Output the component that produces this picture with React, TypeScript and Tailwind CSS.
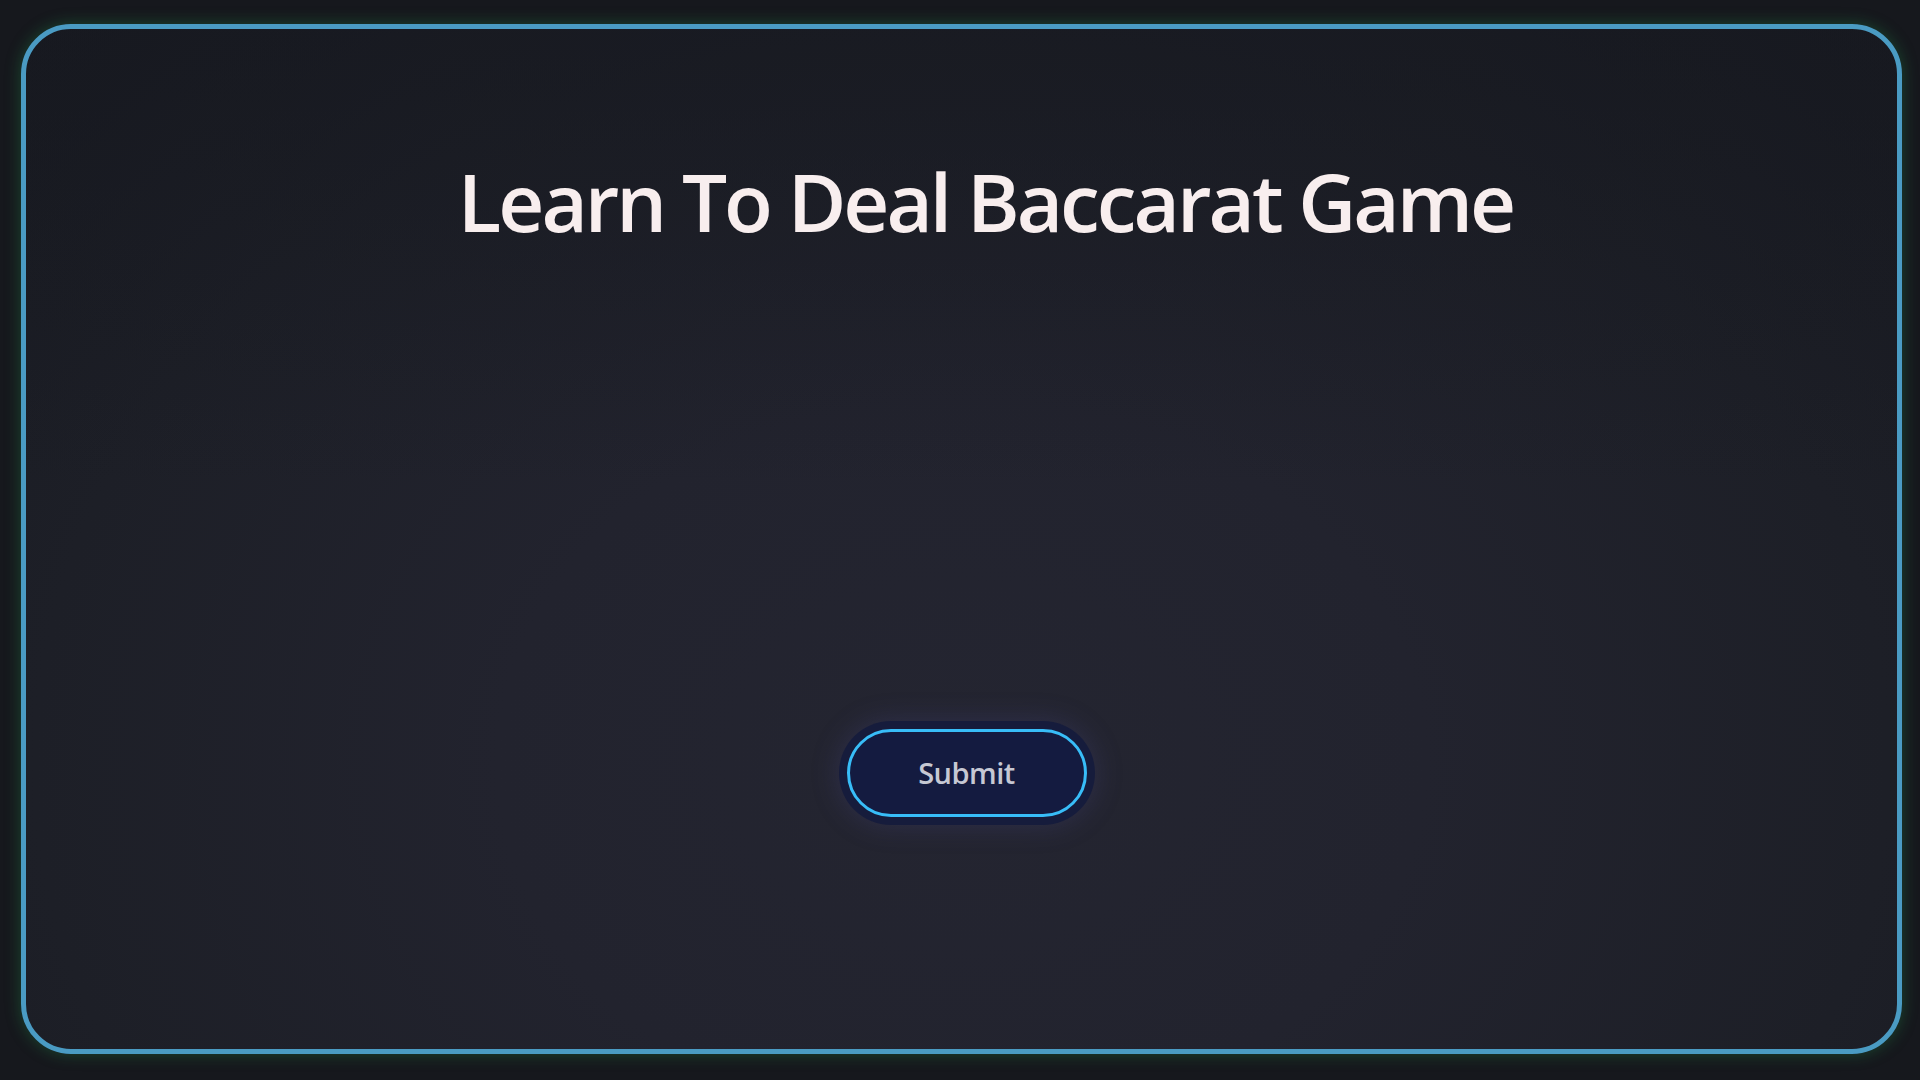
export default function App() {
  return (
    <div className="min-h-screen w-full bg-[#16181d] pt-[24px] pl-[21px]" style={{ fontFamily: '"Open Sans", "Noto Sans", sans-serif' }}>
      <div className="flex h-[1030px] w-[1881px] flex-col items-center rounded-[50px] border-[5px] border-[#4a9bc3] bg-[linear-gradient(180deg,rgba(22,24,31,0.6)_0%,rgba(22,24,31,0)_45%),radial-gradient(ellipse_at_50%_72%,#242531_0%,#22232e_35%,#1d1f27_70%,#181a21_100%)] shadow-[0_0_16px_rgba(34,160,80,0.35)]">
        <h1 className="mt-[132px] pl-[48px] text-[80px] font-semibold leading-none tracking-[-3px] text-[#f8eeee]">
          Learn To Deal Baccarat Game
        </h1>
        <button
          type="button"
          className="mt-[488px] ml-[10px] h-[88px] w-[240px] rounded-full border-[3px] border-[#38bdf8] bg-[#141b40] text-[29px] font-semibold tracking-[-0.5px] text-[#c6c8d3] shadow-[0_0_0_8px_#161c3c,0_0_26px_10px_rgba(70,70,130,0.3)]"
        >
          Submit
        </button>
      </div>
    </div>
  );
}
